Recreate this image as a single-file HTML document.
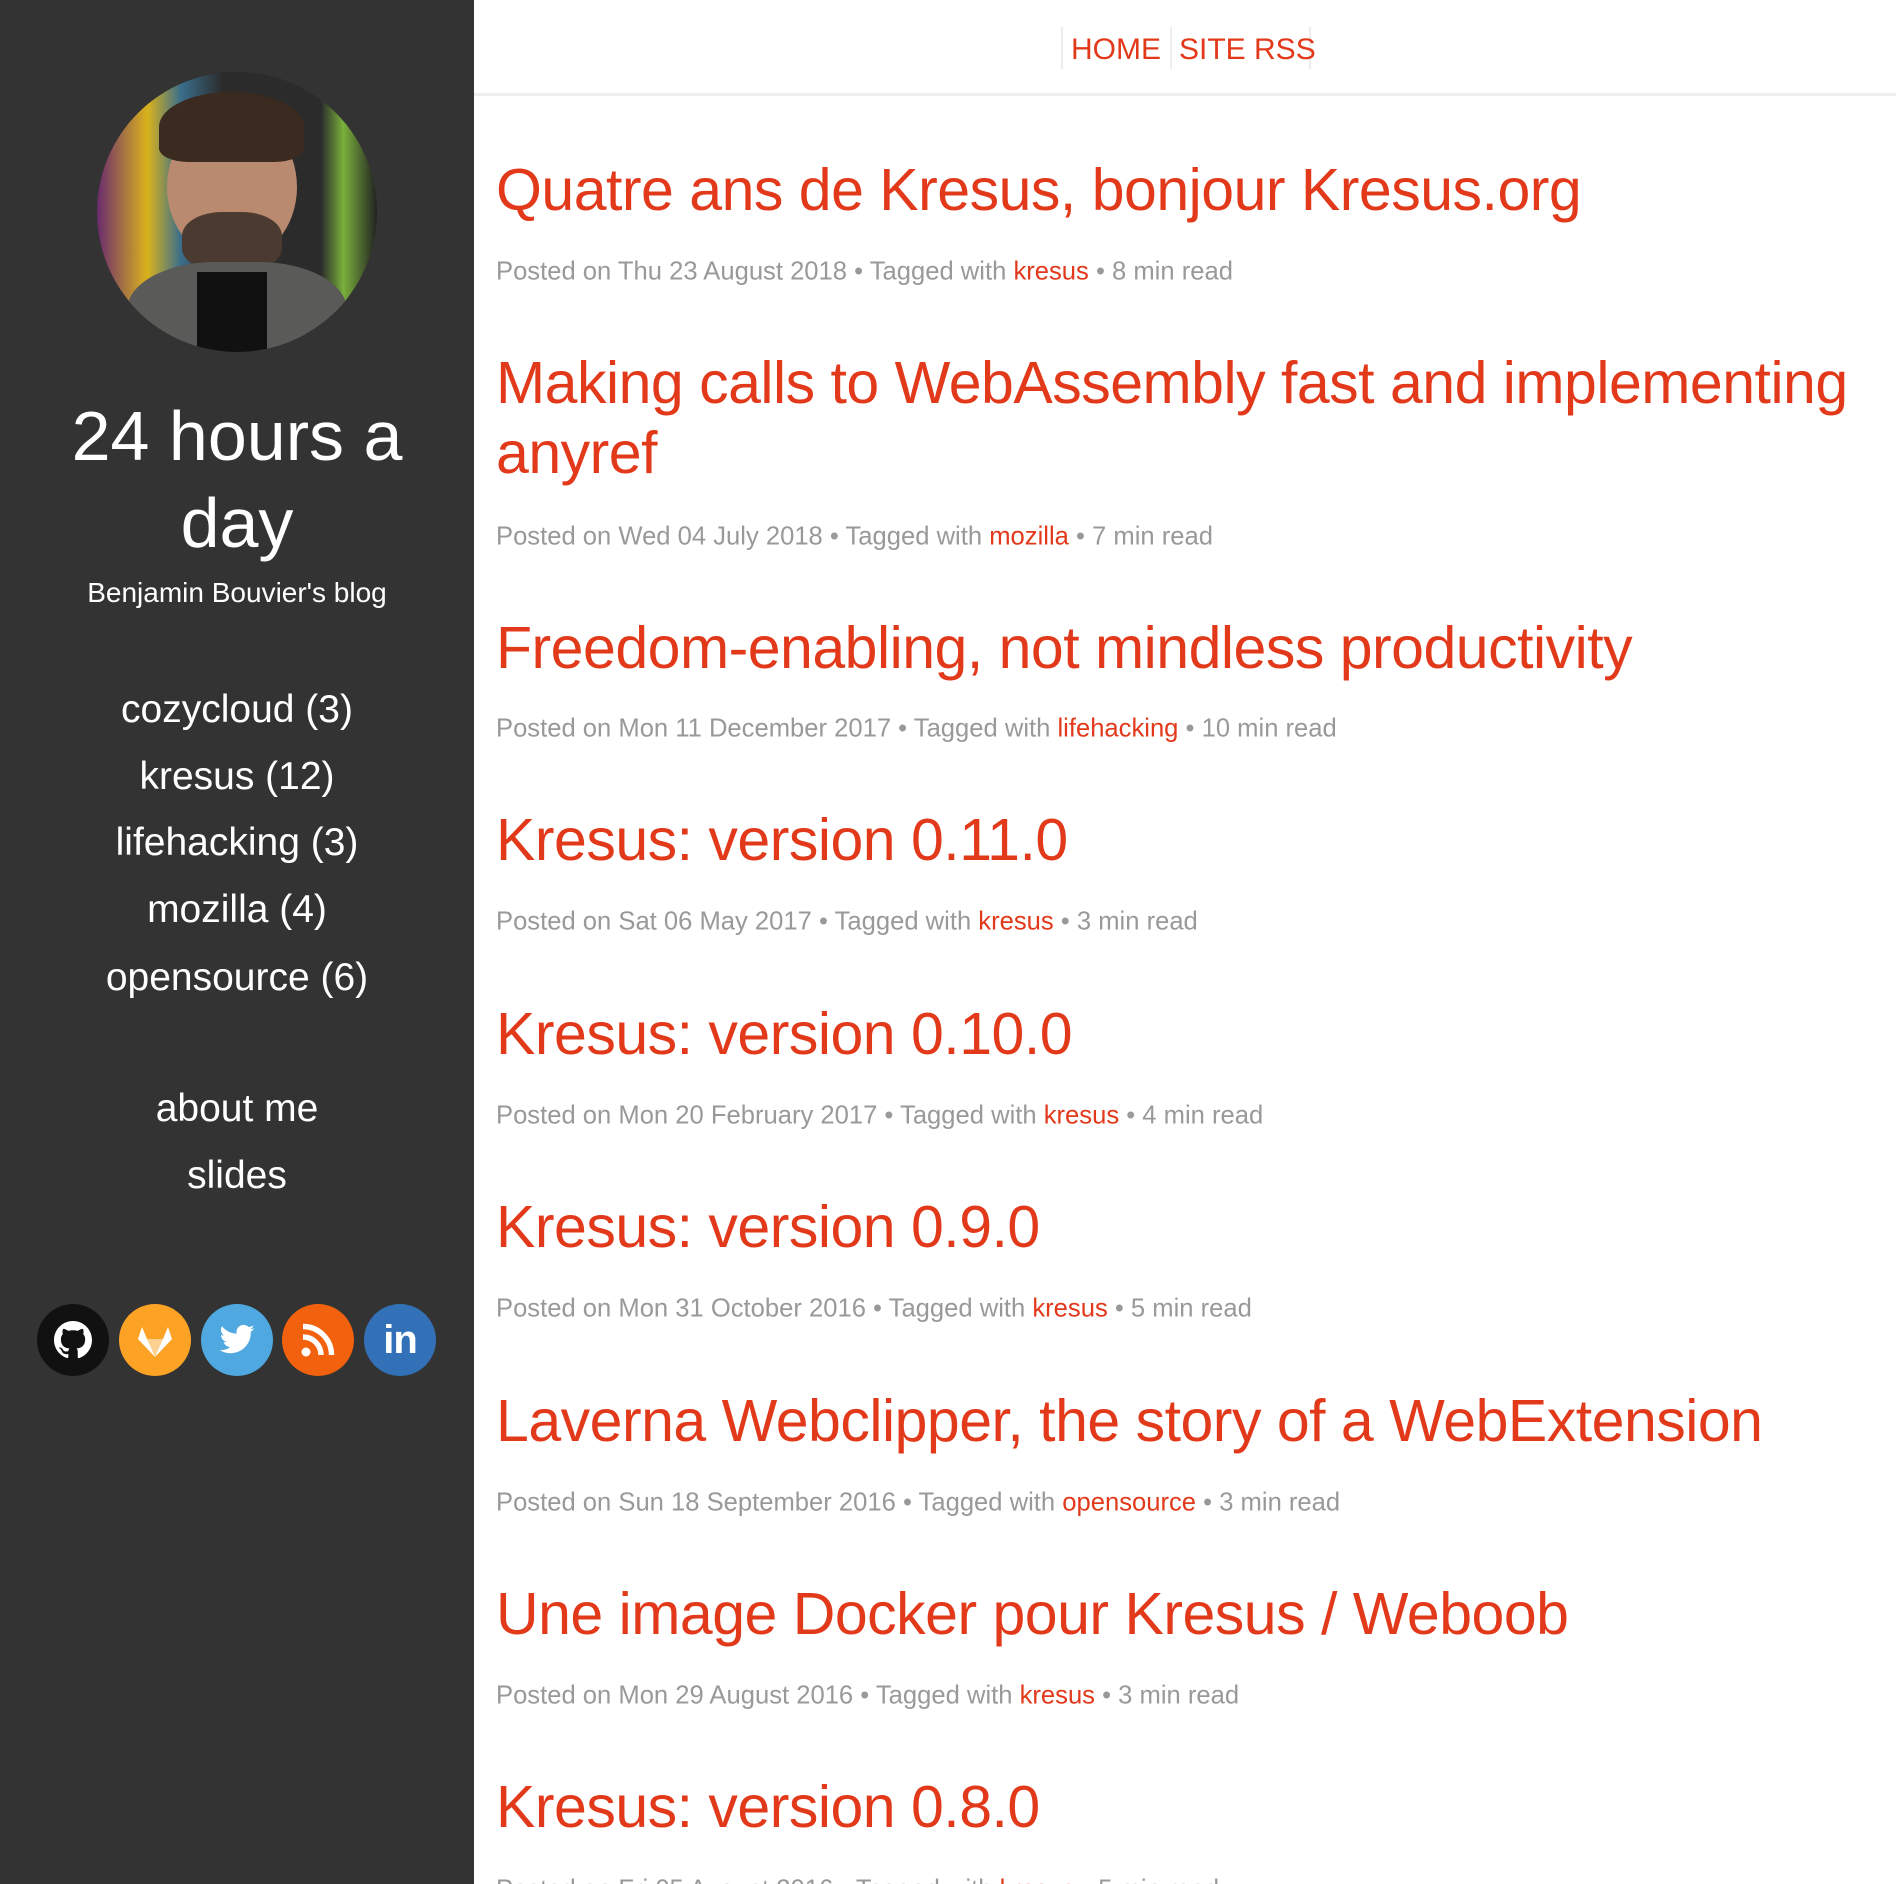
<!DOCTYPE html>
<html style="width:1896px;height:1884px;overflow:hidden"><head><meta charset="utf-8"><style>
*{margin:0;padding:0;box-sizing:border-box}
body{width:1896px;height:1884px;overflow:hidden;background:#fff;font-family:"Liberation Sans",sans-serif;position:relative}
#side{position:absolute;left:0;top:0;width:474px;height:1884px;background:#333;color:#fff;text-align:center}
.av{position:absolute;left:97px;top:72px;width:280px;height:280px;border-radius:50%;overflow:hidden;background:#2a2a2a}
.c{position:absolute;left:0;width:474px;text-align:center;transform:translateY(-50%);white-space:nowrap}
.ic{position:absolute;top:1304px;width:72px;height:72px;border-radius:50%;display:flex;align-items:center;justify-content:center}
#nav{position:absolute;left:474px;top:0;width:1422px;height:96px;border-bottom:3px solid #eee}
.nv{position:absolute;top:27px;height:42px;border-left:2px solid #eee}
.nt{position:absolute;top:33px;color:#e2391b;font-size:30px}
.t{position:absolute;left:496px;color:#e2391b;font-size:59px;font-weight:300;white-space:nowrap;transform:translateY(-50%);letter-spacing:-0.5px}
.m{position:absolute;left:496px;color:#999;font-size:25.6px;white-space:nowrap;transform:translateY(-50%)}
.m b{color:#e2391b;font-weight:normal}
</style></head><body>
<div id="side">
<div class="av">
<div style="position:absolute;left:0;top:0;width:280px;height:280px;background:linear-gradient(90deg,#6a2b6e 0,#d9b21c 18%,#3a6e8c 30%,#2b2b2b 45%,#2b2b2b 80%,#7ab03c 88%,#222 100%)"></div>
<div style="position:absolute;left:70px;top:40px;width:130px;height:150px;border-radius:50%;background:#b98a70"></div>
<div style="position:absolute;left:62px;top:20px;width:145px;height:70px;border-radius:50% 50% 20% 20%;background:#3a2a20"></div>
<div style="position:absolute;left:85px;top:140px;width:100px;height:60px;border-radius:40%;background:#4a3a30"></div>
<div style="position:absolute;left:30px;top:190px;width:220px;height:120px;border-radius:40% 40% 0 0;background:#5a5a58"></div>
<div style="position:absolute;left:100px;top:200px;width:70px;height:80px;background:#111"></div>
</div>
<div class="c" style="top:436px;font-size:70px;font-weight:300">24 hours a</div>
<div class="c" style="top:523px;font-size:70px;font-weight:300">day</div>
<div class="c" style="top:593px;font-size:28px">Benjamin Bouvier's blog</div>
<div class="c" style="top:710px;font-size:39px">cozycloud (3)</div>
<div class="c" style="top:777px;font-size:39px">kresus (12)</div>
<div class="c" style="top:843px;font-size:39px">lifehacking (3)</div>
<div class="c" style="top:910px;font-size:39px">mozilla (4)</div>
<div class="c" style="top:978px;font-size:39px">opensource (6)</div>
<div class="c" style="top:1109px;font-size:39px">about me</div>
<div class="c" style="top:1176px;font-size:39px">slides</div>
<div class="ic" style="left:37px;background:#111"><svg width="38" height="38" viewBox="0 0 16 16"><path fill="#fff" d="M8 0C3.58 0 0 3.58 0 8c0 3.54 2.29 6.53 5.47 7.59.4.07.55-.17.55-.38v-1.33c-2.23.49-2.7-1.07-2.7-1.07-.36-.93-.89-1.17-.89-1.17-.73-.5.06-.49.06-.49.8.06 1.23.83 1.23.83.72 1.22 1.87.87 2.33.66.07-.52.28-.87.5-1.07-1.78-.2-3.64-.89-3.64-3.95 0-.87.31-1.59.82-2.15-.08-.2-.36-1.02.08-2.12 0 0 .67-.21 2.2.82a7.6 7.6 0 0 1 4 0c1.53-1.04 2.2-.82 2.2-.82.44 1.1.16 1.920.08 2.12.51.56.82 1.27.82 2.15 0 3.07-1.87 3.75-3.65 3.95.29.25.54.73.54 1.48v2.2c0 .21.15.46.55.38A8 8 0 0 0 16 8c0-4.42-3.58-8-8-8z"/></svg></div>
<div class="ic" style="left:119px;background:#fca326"><svg width="40" height="40" viewBox="0 0 40 40"><path fill="#fff" d="M20 37 3 19 7 7 12 19 28 19 33 7 37 19z"/><path fill="#fca326" d="M20 37 12 19 28 19z" opacity=".5"/></svg></div>
<div class="ic" style="left:201px;background:#4fa8e0"><svg width="38" height="38" viewBox="0 0 24 24"><path fill="#fff" d="M23 4.6a9 9 0 0 1-2.6.7 4.5 4.5 0 0 0 2-2.5 9 9 0 0 1-2.9 1.1 4.5 4.5 0 0 0-7.7 4.1A12.8 12.8 0 0 1 2.5 3.3a4.5 4.5 0 0 0 1.4 6 4.5 4.5 0 0 1-2-.6 4.5 4.5 0 0 0 3.6 4.5 4.5 4.5 0 0 1-2 .1 4.5 4.5 0 0 0 4.2 3.1A9 9 0 0 1 1 18.3a12.8 12.8 0 0 0 19.7-11.4A9 9 0 0 0 23 4.6z"/></svg></div>
<div class="ic" style="left:282px;background:#f2620e"><svg width="36" height="36" viewBox="0 0 24 24"><circle cx="4" cy="20" r="3" fill="#fff"/><path fill="none" stroke="#fff" stroke-width="3.6" d="M2 10a12 12 0 0 1 12 12M2 3a19 19 0 0 1 19 19"/></svg></div>
<div class="ic" style="left:364px;background:#3271b8;color:#fff;font-weight:bold;font-size:40px;letter-spacing:-1px">in</div>
</div>
<div id="nav">
<div class="nv" style="left:587px"></div><div class="nv" style="left:696px"></div><div class="nv" style="left:835px"></div>
<div class="nt" style="left:597px">HOME</div><div class="nt" style="left:705px">SITE RSS</div>
</div>
<div class="t" style="top:190px">Quatre ans de Kresus, bonjour Kresus.org</div>
<div class="m" style="top:272px">Posted on Thu 23 August 2018 • Tagged with <b>kresus</b> • 8 min read</div>
<div class="t" style="top:383px">Making calls to WebAssembly fast and implementing</div>
<div class="t" style="top:453px">anyref</div>
<div class="m" style="top:537px">Posted on Wed 04 July 2018 • Tagged with <b>mozilla</b> • 7 min read</div>
<div class="t" style="top:648px">Freedom-enabling, not mindless productivity</div>
<div class="m" style="top:729px">Posted on Mon 11 December 2017 • Tagged with <b>lifehacking</b> • 10 min read</div>
<div class="t" style="top:840px">Kresus: version 0.11.0</div>
<div class="m" style="top:922px">Posted on Sat 06 May 2017 • Tagged with <b>kresus</b> • 3 min read</div>
<div class="t" style="top:1034px">Kresus: version 0.10.0</div>
<div class="m" style="top:1116px">Posted on Mon 20 February 2017 • Tagged with <b>kresus</b> • 4 min read</div>
<div class="t" style="top:1227px">Kresus: version 0.9.0</div>
<div class="m" style="top:1309px">Posted on Mon 31 October 2016 • Tagged with <b>kresus</b> • 5 min read</div>
<div class="t" style="top:1421px">Laverna Webclipper, the story of a WebExtension</div>
<div class="m" style="top:1503px">Posted on Sun 18 September 2016 • Tagged with <b>opensource</b> • 3 min read</div>
<div class="t" style="top:1614px">Une image Docker pour Kresus / Weboob</div>
<div class="m" style="top:1696px">Posted on Mon 29 August 2016 • Tagged with <b>kresus</b> • 3 min read</div>
<div class="t" style="top:1807px">Kresus: version 0.8.0</div>
<div class="m" style="top:1890px">Posted on Fri 05 August 2016 • Tagged with <b>kresus</b> • 5 min read</div>
</body></html>
